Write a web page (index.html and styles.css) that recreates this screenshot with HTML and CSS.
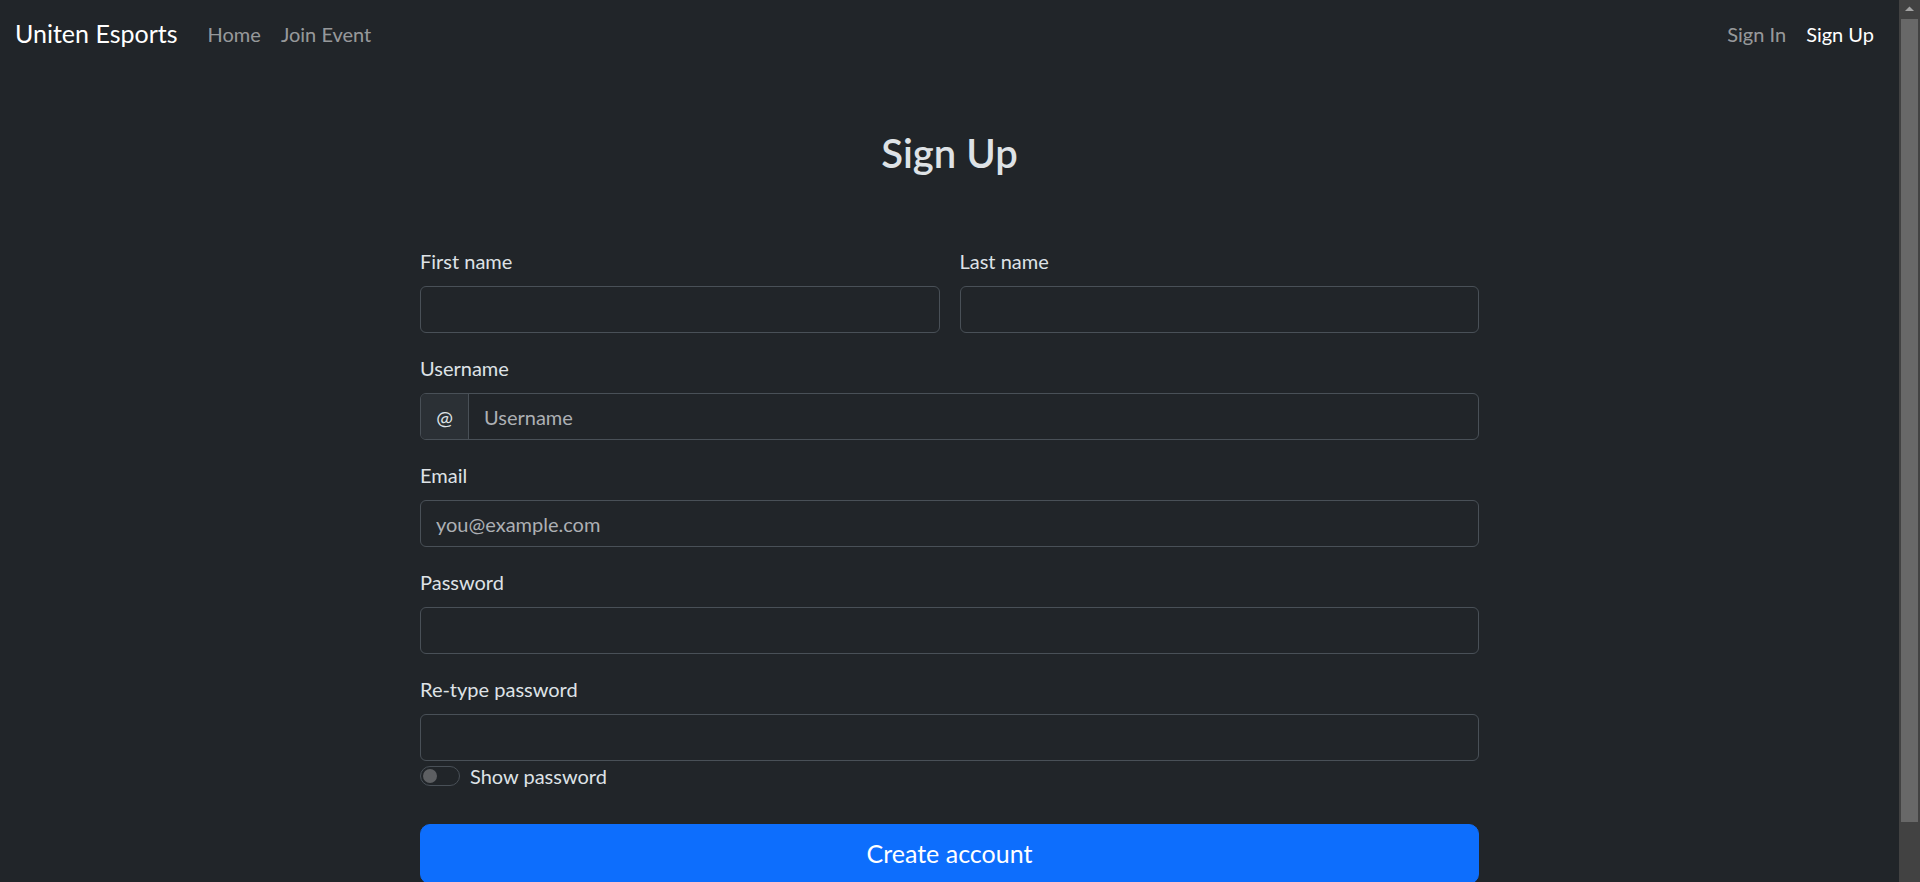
FILE: index.html
```html
<!DOCTYPE html>
<html lang="en">
<head>
<meta charset="utf-8">
<title>Sign Up - Uniten Esports</title>
<link rel="stylesheet" href="styles.css">
</head>
<body>
<div class="app">
  <nav class="navbar">
    <div class="nav-group">
      <a class="brand" href="#">Uniten Esports</a>
      <ul class="nav-links">
        <li><a class="nav-link" href="#">Home</a></li>
        <li><a class="nav-link" href="#">Join Event</a></li>
      </ul>
    </div>
    <ul class="nav-links">
      <li><a class="nav-link" href="#">Sign In</a></li>
      <li><a class="nav-link active" href="#">Sign Up</a></li>
    </ul>
  </nav>
  <main class="page">
    <div class="header">
      <h2 class="title">Sign Up</h2>
    </div>
    <form class="form">
      <div class="grid">
        <div class="field">
          <label class="label" for="firstName">First name</label>
          <input class="control" id="firstName" type="text">
        </div>
        <div class="field">
          <label class="label" for="lastName">Last name</label>
          <input class="control" id="lastName" type="text">
        </div>
        <div class="field full">
          <label class="label" for="username">Username</label>
          <div class="input-group">
            <span class="addon">@</span>
            <input class="group-control" id="username" type="text" placeholder="Username">
          </div>
        </div>
        <div class="field full">
          <label class="label" for="email">Email</label>
          <input class="control" id="email" type="email" placeholder="you@example.com">
        </div>
        <div class="field full">
          <label class="label" for="password">Password</label>
          <input class="control" id="password" type="password">
        </div>
        <div class="field full">
          <label class="label" for="password2">Re-type password</label>
          <input class="control" id="password2" type="password">
          <div class="form-check">
            <span class="switch"><span class="knob"></span></span>
            <span class="check-label">Show password</span>
          </div>
        </div>
      </div>
      <button class="btn" type="button">Create account</button>
    </form>
  </main>
</div>
<div class="scrollbar" aria-hidden="true">
  <div class="sb-button">
    <svg width="21" height="17" viewBox="0 0 21 17"><polygon points="6,11 15,11 10.5,6.5" fill="#a3a3a3"/></svg>
  </div>
  <div class="sb-thumb"></div>
</div>
</body>
</html>
```
FILE: styles.css
```css
html {
  background: #212529;
}
body {
  margin: 0;
  background: #212529;
  color: #dee2e6;
  font-family: Lato, "Noto Sans", sans-serif;
  font-size: 20px;
  line-height: 30px;
  display: flex;
  align-items: flex-start;
}
a {
  text-decoration: none;
}
.app {
  flex: 1;
  min-width: 0;
}
.scrollbar {
  position: sticky;
  top: 0;
  flex: 0 0 21px;
  height: 100vh;
  background: #424242;
  display: flex;
  flex-direction: column;
}
.sb-button {
  height: 17px;
  line-height: 0;
}
.sb-thumb {
  height: 803px;
  margin: 2px 2px 0;
  background: #686868;
}
.navbar {
  height: 67px;
  display: flex;
  align-items: center;
  justify-content: space-between;
  padding: 0 15px;
  background: #212529;
}
.nav-group {
  display: flex;
  align-items: center;
}
.brand {
  font-size: 25px;
  line-height: 37.5px;
  color: #fff;
  margin-right: 20px;
}
.nav-links {
  display: flex;
  list-style: none;
  margin: 0;
  padding: 0;
}
.nav-link {
  display: block;
  padding: 0 10px;
  font-size: 20px;
  line-height: 30px;
  color: rgba(255, 255, 255, 0.55);
}
.nav-link.active {
  color: #fff;
}
.page {
  max-width: 1059px;
  margin: 0 auto;
  padding-bottom: 46px;
}
.header {
  padding: 62px 0 59px;
  text-align: center;
}
.title {
  margin: 0 0 10px;
  font-size: 40px;
  line-height: 48px;
  font-weight: 600;
  color: #dee2e6;
}
.grid {
  display: grid;
  grid-template-columns: 1fr 1fr;
  column-gap: 20px;
  row-gap: 20px;
}
.field {
  display: flex;
  flex-direction: column;
  min-width: 0;
}
.field.full {
  grid-column: 1 / -1;
}
.label {
  display: block;
  margin-bottom: 10px;
  line-height: 30px;
  color: #dee2e6;
}
.control,
.input-group {
  box-sizing: border-box;
  height: 47px;
  border: 1.25px solid #495057;
  border-radius: 6px;
  background: #212529;
}
.control {
  width: 100%;
  padding: 0 15px;
  font: inherit;
  color: #dee2e6;
  outline: none;
}
.control::placeholder,
.group-control::placeholder {
  color: #adb0b4;
}
.input-group {
  display: flex;
  overflow: hidden;
}
.addon {
  box-sizing: border-box;
  width: 48px;
  display: flex;
  align-items: center;
  justify-content: center;
  background: #2b3035;
  border-right: 1.25px solid #495057;
  color: #dee2e6;
}
.group-control {
  flex: 1;
  min-width: 0;
  border: 0;
  padding: 0 15px;
  font: inherit;
  color: #dee2e6;
  background: transparent;
  outline: none;
}
.form-check {
  display: flex;
  align-items: flex-start;
  min-height: 30px;
  margin-bottom: 2.5px;
}
.switch {
  box-sizing: border-box;
  width: 40px;
  height: 20px;
  margin-top: 5px;
  margin-right: 10px;
  border: 1.25px solid #495057;
  border-radius: 10px;
  background: #212529;
  display: flex;
  align-items: center;
  padding-left: 2px;
}
.knob {
  width: 14px;
  height: 14px;
  border-radius: 50%;
  background: #5d5f62;
}
.check-label {
  line-height: 30px;
  color: #dee2e6;
}
.btn {
  display: block;
  box-sizing: border-box;
  width: 100%;
  height: 60px;
  margin-top: 30px;
  border: 1.25px solid #0d6efd;
  border-radius: 10px;
  background: #0d6efd;
  color: #fff;
  font-family: inherit;
  font-size: 25px;
  line-height: 37.5px;
  cursor: pointer;
}
```
